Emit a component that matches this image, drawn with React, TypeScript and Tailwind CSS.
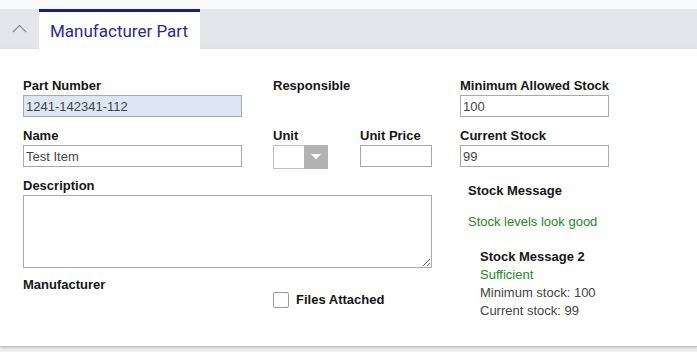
const label = 'block h-[15px] text-[13px] leading-[15px] font-bold text-[#161616]'
const input = 'block h-[22px] border border-[#aaaaaa] px-[2px] text-[13px] leading-[20px] text-[#444]'

export default function App() {
  return (
    <div className="h-[352px] w-[697px] overflow-hidden bg-[#efefef] font-['Liberation_Sans',Arial,sans-serif]">
      <div className="h-[9px] bg-[#fafafa]" />
      <div className="flex h-[40px] bg-[#e5e6eb]">
        <div className="flex w-[39px] items-center justify-center pb-[2px]">
          <svg width="15" height="9" viewBox="0 0 15 9" fill="none">
            <path d="M1 8L7.5 1.5L14 8" stroke="#8c8c8c" strokeWidth="1.2" />
          </svg>
        </div>
        <div className="border-t-[3px] border-[#1c1c8c] bg-white pl-[11px] pr-[12px] pt-[7px] font-['Roboto',sans-serif] text-[17px] leading-[24px] text-[#2b2b8c]">
          Manufacturer Part
        </div>
      </div>
      <div className="flex h-[298px] border-b border-[#c4c4c4] bg-white pl-[23px] pt-[29px] shadow-[0_1px_3px_rgba(0,0,0,0.18)]">
        <div className="w-[409px]">
          <div className="flex gap-[31px]">
            <div className="w-[219px]">
              <span className={label}>Part Number</span>
              <input className={`${input} mt-[2px] w-[219px] bg-[#dde6f4]`} defaultValue="1241-142341-112" readOnly />
            </div>
            <span className={label}>Responsible</span>
          </div>
          <div className="mt-[11px] flex">
            <div className="w-[219px]">
              <span className={label}>Name</span>
              <input className={`${input} mt-[2px] w-[219px] bg-white`} defaultValue="Test Item" />
            </div>
            <div className="ml-[31px] w-[87px]">
              <span className={label}>Unit</span>
              <div className="mt-[2px] flex h-[24px] w-[55px]">
                <div className="w-[31px] border border-r-0 border-[#bdbdbd] bg-white" />
                <div className="flex w-[24px] items-center justify-center bg-[#b3b3b3]">
                  <svg width="10" height="6" viewBox="0 0 10 6">
                    <path d="M0 0h10L5 5.5z" fill="#fff" />
                  </svg>
                </div>
              </div>
            </div>
            <div>
              <span className={label}>Unit Price</span>
              <input className={`${input} mt-[2px] w-[72px] bg-white`} />
            </div>
          </div>
          <div className="mt-[9px]">
            <span className={label}>Description</span>
            <textarea className="mt-[2px] block h-[73px] w-[409px] border border-[#aaaaaa] bg-white text-[13px]" />
          </div>
          <div className="mt-[9px] flex">
            <span className={`${label} w-[250px]`}>Manufacturer</span>
            <label className="mt-[13px] flex items-center gap-[7px]">
              <span className="h-[16px] w-[16px] rounded-[2px] border border-[#9a9a9a] bg-white" />
              <span className="text-[13px] font-bold text-[#161616]">Files Attached</span>
            </label>
          </div>
        </div>
        <div className="ml-[28px] w-[150px]">
          <span className={label}>Minimum Allowed Stock</span>
          <input className={`${input} mt-[2px] w-[149px] bg-white`} defaultValue="100" />
          <span className={`${label} mt-[11px]`}>Current Stock</span>
          <input className={`${input} mt-[2px] w-[149px] bg-white`} defaultValue="99" />
          <div className="mt-[16px] pl-[8px] text-[13px] leading-[15px]">
            <span className="block font-bold text-[#161616]">Stock Message</span>
            <span className="mt-[16px] block whitespace-nowrap text-[#238a23]">Stock levels look good</span>
            <div className="mt-[19px] pl-[12px] leading-[18px]">
              <span className="block font-bold text-[#161616]">Stock Message 2</span>
              <span className="block text-[#238a23]">Sufficient</span>
              <span className="block whitespace-nowrap text-[#444]">Minimum stock: 100</span>
              <span className="block whitespace-nowrap text-[#444]">Current stock: 99</span>
            </div>
          </div>
        </div>
      </div>
    </div>
  )
}
